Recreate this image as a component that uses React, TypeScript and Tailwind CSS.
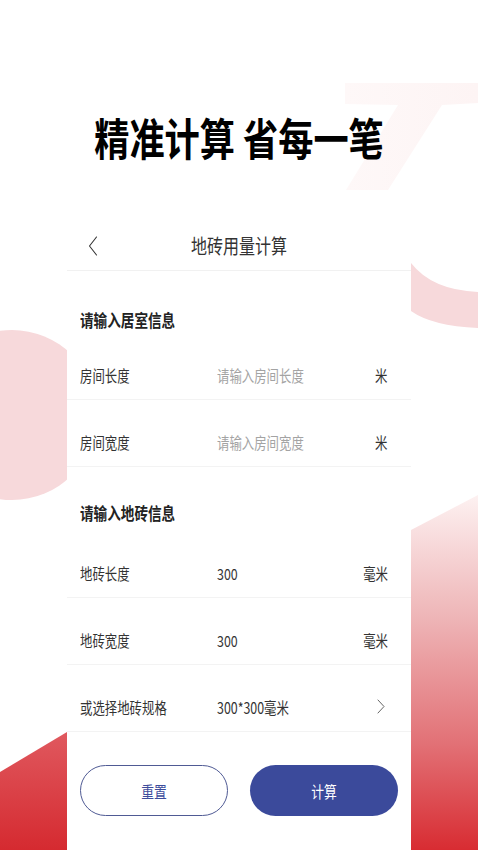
import React from 'react';

const sq = 'inline-block origin-left scale-x-[0.8] whitespace-nowrap';
const sqRight = 'inline-block origin-right scale-x-[0.8] whitespace-nowrap';
const sqCenter = 'inline-block origin-center scale-x-[0.8] whitespace-nowrap';

function Decorations() {
  return (
    <svg
      className="pointer-events-none absolute left-0 top-0 h-[850px] w-[478px]"
      viewBox="0 0 478 850"
      preserveAspectRatio="none"
    >
      <defs>
        <linearGradient id="rightBand" x1="0" y1="495" x2="0" y2="850" gradientUnits="userSpaceOnUse">
          <stop offset="0" stopColor="#fdf1f1" />
          <stop offset="0.35" stopColor="#eeb4b6" />
          <stop offset="0.7" stopColor="#e27176" />
          <stop offset="1" stopColor="#d82c32" />
        </linearGradient>
        <linearGradient id="leftBand" x1="0" y1="732" x2="0" y2="850" gradientUnits="userSpaceOnUse">
          <stop offset="0" stopColor="#e0595f" />
          <stop offset="1" stopColor="#d52a30" />
        </linearGradient>
        <linearGradient id="seven" x1="345" y1="0" x2="478" y2="0" gradientUnits="userSpaceOnUse">
          <stop offset="0" stopColor="#fef8f8" />
          <stop offset="1" stopColor="#fdf4f4" />
        </linearGradient>
      </defs>
      {/* very faint "7" behind the heading */}
      <polygon points="345,83 478,83 478,103 442,105 388,190 346,190 398,105 345,104" fill="url(#seven)" />
      {/* crescent on the right */}
      <path d="M411 263 Q432 290 478 292 L478 328 Q432 326 411 311 Z" fill="#f7d9db" />
      {/* circle on the left */}
      <circle cx="12" cy="415" r="85" fill="#f7d9db" />
      {/* gradients at the bottom */}
      <polygon points="411,530 478,495 478,850 411,850" fill="url(#rightBand)" />
      <polygon points="0,772 67,732 67,850 0,850" fill="url(#leftBand)" />
    </svg>
  );
}

interface RowProps {
  label: string;
  value: string;
  placeholder?: boolean;
  unit?: string;
  arrow?: boolean;
}

function Row({ label, value, placeholder, unit, arrow }: RowProps) {
  return (
    <div className="flex h-[67px] items-center border-b border-[#f3f3f3] pl-[13px] pr-[23px] pt-[17px] text-[15.5px] leading-[22px]">
      <div className="w-[137px] shrink-0 text-[#333]">
        <span className={sq}>{label}</span>
      </div>
      <div className={`flex-1 ${placeholder ? 'text-[#a3a3a3]' : 'text-[#333]'}`}>
        <span className={sq}>{value}</span>
      </div>
      {unit && (
        <div className="text-right text-[#333]">
          <span className={sqRight}>{unit}</span>
        </div>
      )}
      {arrow && (
        <svg className="mr-[3px] h-[15px] w-[8px]" viewBox="0 0 8 15" fill="none">
          <path d="M1 1 L7 7.5 L1 14" stroke="#666" strokeWidth="1" strokeLinecap="round" strokeLinejoin="round" />
        </svg>
      )}
    </div>
  );
}

export default function App() {
  return (
    <div className="relative min-h-[850px] w-full overflow-hidden bg-white font-['Noto_Sans_CJK_SC','Noto_Sans',sans-serif]">
      <Decorations />
      <div className="relative flex flex-col items-center">
        <h1 className="mt-[112px] h-[50px] text-[44px] font-bold leading-[50px] text-black">
          <span className={sqCenter}>精准计算 省每一笔</span>
        </h1>

        <div className="mt-[60px] min-h-[628px] w-[344px] bg-white">
          <div className="grid h-[49px] grid-cols-[56px_1fr_56px] items-center border-b border-[#f1f1f1]">
            <div className="pl-[21px]">
              <svg className="h-[20px] w-[10px]" viewBox="0 0 10 20" fill="none">
                <path d="M8.5 1 L1.5 10 L8.5 19" stroke="#333" strokeWidth="1.1" strokeLinecap="round" strokeLinejoin="round" />
              </svg>
            </div>
            <div className="text-center text-[20px] leading-[26px] text-[#333]">
              <span className={sqCenter}>地砖用量计算</span>
            </div>
            <div />
          </div>

          <div className="h-[62px] pl-[13px] pt-[38px] text-[17px] font-bold leading-[22px] text-[#222]">
            <span className={sq}>请输入居室信息</span>
          </div>
          <Row label="房间长度" value="请输入房间长度" placeholder unit="米" />
          <Row label="房间宽度" value="请输入房间宽度" placeholder unit="米" />

          <div className="h-[64px] pl-[13px] pt-[35px] text-[17px] font-bold leading-[22px] text-[#222]">
            <span className={sq}>请输入地砖信息</span>
          </div>
          <Row label="地砖长度" value="300" unit="毫米" />
          <Row label="地砖宽度" value="300" unit="毫米" />
          <Row label="或选择地砖规格" value="300*300毫米" arrow />

          <div className="mt-[33px] flex justify-between px-[13px]">
            <button className="flex h-[51px] w-[148px] items-center justify-center rounded-full border border-[#4f5a94] bg-white text-[16px] text-[#3d4c9c]">
              <span className={sqCenter}>重置</span>
            </button>
            <button className="flex h-[51px] w-[148px] items-center justify-center rounded-full bg-[#3b4a9b] text-[16px] text-white">
              <span className={sqCenter}>计算</span>
            </button>
          </div>
        </div>
      </div>
    </div>
  );
}
